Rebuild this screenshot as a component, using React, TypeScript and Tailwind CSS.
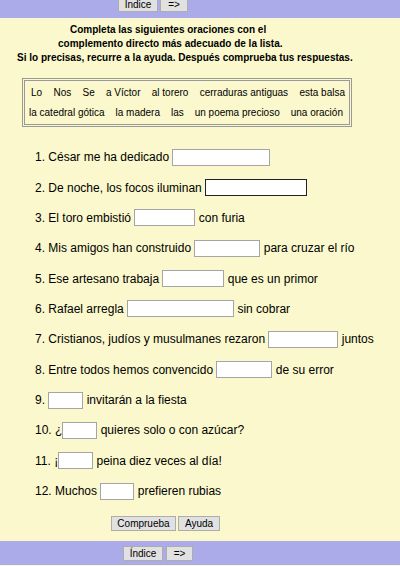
import React from "react";

const sentences: { pre: string; w: number; post?: string; dark?: boolean }[] = [
  { pre: "1. César me ha dedicado ", w: 98 },
  { pre: "2. De noche, los focos iluminan ", w: 102, dark: true },
  { pre: "3. El toro embistió ", w: 61, post: " con furia" },
  { pre: "4. Mis amigos han construido ", w: 66, post: " para cruzar el río" },
  { pre: "5. Ese artesano trabaja ", w: 62, post: " que es un primor" },
  { pre: "6. Rafael arregla ", w: 107, post: " sin cobrar" },
  { pre: "7. Cristianos, judíos y musulmanes rezaron ", w: 70, post: " juntos" },
  { pre: "8. Entre todos hemos convencido ", w: 56, post: " de su error" },
  { pre: "9. ", w: 35, post: " invitarán a la fiesta" },
  { pre: "10. ¿", w: 35, post: " quieres solo o con azúcar?" },
  { pre: "11. ¡", w: 35, post: " peina diez veces al día!" },
  { pre: "12. Muchos ", w: 34, post: " prefieren rubias" },
];

const row1 = ["Lo", "Nos", "Se", "a Víctor", "al torero", "cerraduras antiguas", "esta balsa"];
const row2 = ["la catedral gótica", "la madera", "las", "un poema precioso", "una oración"];

function NavButton({ children, w }: { children: React.ReactNode; w: string }) {
  return (
    <button
      className={`${w} h-[15px] border border-[#adadad] bg-[#e1e1e1] text-[10px] leading-[13px] text-black`}
    >
      {children}
    </button>
  );
}

export default function App() {
  return (
    <div className="w-[400px] h-[566px] bg-[#faf8cc] font-['Liberation_Sans',Arial,sans-serif] text-black overflow-hidden flex flex-col">
      {/* top nav */}
      <div className="h-[18px] bg-[#ababe9] flex items-start pl-[118px] gap-[2px] overflow-hidden">
        <div className="-mt-[3px] flex gap-[2px]">
          <NavButton w="w-[40px]">Índice</NavButton>
          <NavButton w="w-[28px]">=&gt;</NavButton>
        </div>
      </div>

      {/* instructions */}
      <div className="mt-[5px] text-[10px] font-bold leading-[14px] whitespace-nowrap">
        <p className="pl-[70px]">Completa las siguientes oraciones con el</p>
        <p className="pl-[58px]">complemento directo más adecuado de la lista.</p>
        <p className="pl-[17px]">Si lo precisas, recurre a la ayuda. Después comprueba tus respuestas.</p>
      </div>

      {/* word bank */}
      <div className="ml-[22px] mt-[13px] w-[330px] h-[49px] border-[3px] border-double border-[#999] flex flex-col justify-center gap-[6px] text-[10px] leading-[14px]">
        <div className="flex justify-between pl-[6px] pr-[4px]">
          {row1.map((w) => (
            <span key={w}>{w}</span>
          ))}
        </div>
        <div className="flex justify-between pl-[4px] pr-[6px]">
          {row2.map((w) => (
            <span key={w}>{w}</span>
          ))}
        </div>
      </div>

      {/* sentences */}
      <div className="mt-[15px] pl-[35px] flex flex-col text-[12px]">
        {sentences.map((s) => (
          <div key={s.pre} className="h-[30.36px] flex items-center whitespace-pre">
            <span>{s.pre}</span>
            <input
              className={`h-[17px] bg-white border ${s.dark ? "border-[#222]" : "border-[#a5a5a5]"}`}
              style={{ width: s.w }}
              type="text"
            />
            {s.post && <span>{s.post}</span>}
          </div>
        ))}
      </div>

      {/* actions */}
      <div className="mt-[10px] pl-[111px] flex gap-[2px]">
        <button className="w-[65px] h-[15px] border border-[#adadad] bg-[#e1e1e1] text-[10px] leading-[13px]">
          Comprueba
        </button>
        <button className="w-[42px] h-[15px] border border-[#adadad] bg-[#e1e1e1] text-[10px] leading-[13px]">
          Ayuda
        </button>
      </div>

      {/* bottom nav */}
      <div className="mt-[10px] h-[24px] bg-[#ababe9] flex items-start pt-[5px] pl-[123px] gap-[3px]">
        <NavButton w="w-[40px]">Índice</NavButton>
        <NavButton w="w-[27px]">=&gt;</NavButton>
      </div>
    </div>
  );
}
